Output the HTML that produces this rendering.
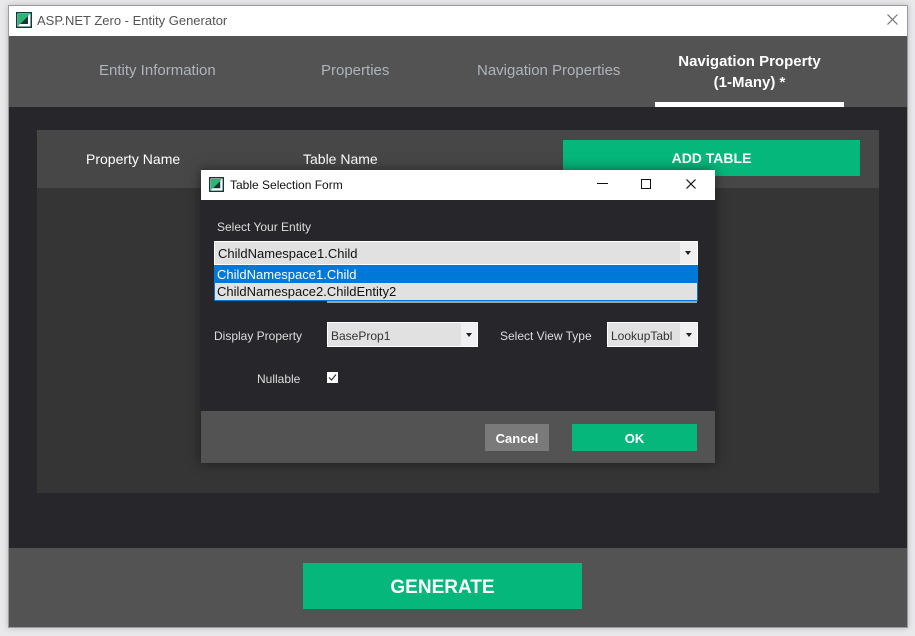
<!DOCTYPE html>
<html><head><style>
*{margin:0;padding:0;box-sizing:border-box}
body{width:915px;height:636px;background:#e9e9ec;font-family:"Liberation Sans",sans-serif;position:relative;overflow:hidden}
.a{position:absolute}
.win{left:8px;top:5px;width:900px;height:623px;border:1px solid #9a9a9a;background:#27272b;box-shadow:0 0 6px rgba(0,0,0,.2)}
.t{color:#aeb4bc;font-size:15px}
</style></head><body>
<div class="a win"></div>
<div class="a" style="left:9px;top:6px;width:898px;height:30px;background:#fff"></div>
<svg class="a" style="left:16px;top:12px" width="16" height="16" viewBox="0 0 16 16"><rect x="0" y="0" width="16" height="16" fill="#0e3a3a"/><rect x="1.5" y="1.5" width="13" height="13" fill="#fff"/><polygon points="2,2 14,2 2,14" fill="#2bb673"/><polygon points="4,12 12,4 12,12" fill="#0e3a3a"/></svg>
<div class="a" style="left:37px;top:13px;font-size:13px;color:#555">ASP.NET Zero - Entity Generator</div>
<svg class="a" style="left:887px;top:14px" width="11" height="11" viewBox="0 0 11 11"><path d="M0.5 0.5L10.5 10.5M10.5 0.5L0.5 10.5" stroke="#777" stroke-width="1.2"/></svg>
<div class="a" style="left:9px;top:36px;width:898px;height:71px;background:#535353"></div>
<div class="a t" style="left:99px;top:62px">Entity Information</div>
<div class="a t" style="left:321px;top:62px">Properties</div>
<div class="a t" style="left:477px;top:62px">Navigation Properties</div>
<div class="a" style="left:655px;top:51px;width:189px;text-align:center;color:#fff;font-weight:bold;font-size:15px;line-height:21px">Navigation Property<br>(1-Many) *</div>
<div class="a" style="left:655px;top:102px;width:189px;height:5px;background:#fff"></div>
<div class="a" style="left:37px;top:130px;width:842px;height:363px;background:#353535"></div>
<div class="a" style="left:37px;top:130px;width:842px;height:58px;background:#474747"></div>
<div class="a" style="left:86px;top:151px;color:#fff;font-size:14px">Property Name</div>
<div class="a" style="left:303px;top:151px;color:#fff;font-size:14px">Table Name</div>
<div class="a" style="left:563px;top:140px;width:297px;height:36px;background:#05b77a;color:#fff;font-weight:bold;font-size:14px;text-align:center;line-height:37px">ADD TABLE</div>
<div class="a" style="left:9px;top:548px;width:898px;height:79px;background:#535353"></div>
<div class="a" style="left:303px;top:563px;width:279px;height:46px;background:#05b77a;color:#fff;font-weight:bold;font-size:19px;text-align:center;line-height:50px">GENERATE</div>
<!-- dialog -->
<div class="a" style="left:201px;top:170px;width:514px;height:293px;background:#27272b;box-shadow:0 0 12px rgba(0,0,0,.5)"></div>
<div class="a" style="left:201px;top:170px;width:514px;height:30px;background:#fff"></div>
<svg class="a" style="left:209px;top:177px" width="15" height="15" viewBox="0 0 16 16"><rect x="0" y="0" width="16" height="16" fill="#0e3a3a"/><rect x="1.5" y="1.5" width="13" height="13" fill="#fff"/><polygon points="2,2 14,2 2,14" fill="#2bb673"/><polygon points="4,12 12,4 12,12" fill="#0e3a3a"/></svg>
<div class="a" style="left:230px;top:178px;font-size:12px;color:#111">Table Selection Form</div>
<div class="a" style="left:597px;top:183px;width:11px;height:1px;background:#111"></div>
<div class="a" style="left:641px;top:179px;width:10px;height:10px;border:1px solid #111"></div>
<svg class="a" style="left:686px;top:179px" width="10" height="10" viewBox="0 0 10 10"><path d="M0.5 0.5L9.5 9.5M9.5 0.5L0.5 9.5" stroke="#111" stroke-width="1.2"/></svg>
<div class="a" style="left:217px;top:220px;color:#ddd;font-size:12px">Select Your Entity</div>
<div class="a" style="left:214px;top:241px;width:484px;height:24px;background:#e1e1e1;border:1px solid #fff"></div>
<div class="a" style="left:680px;top:242px;width:17px;height:22px;background:#f0f0f0"></div>
<div class="a" style="left:685px;top:251px;border:3px solid transparent;border-top:4px solid #222;border-bottom:0"></div>
<div class="a" style="left:218px;top:246px;font-size:13px;color:#111">ChildNamespace1.Child</div>
<div class="a" style="left:327px;top:297px;width:370px;height:6px;background:#a0a0a0"></div>
<div class="a" style="left:214px;top:265px;width:484px;height:36px;background:#e1e1e1;border:1px solid #0078d7"></div>
<div class="a" style="left:215px;top:266px;width:482px;height:17px;background:#0078d7"></div>
<div class="a" style="left:217px;top:267px;font-size:13px;color:#fff">ChildNamespace1.Child</div>
<div class="a" style="left:217px;top:284px;font-size:13px;color:#111">ChildNamespace2.ChildEntity2</div>
<div class="a" style="left:214px;top:329px;color:#ddd;font-size:12px">Display Property</div>
<div class="a" style="left:327px;top:322px;width:151px;height:25px;background:#e1e1e1;border:1px solid #fff"></div>
<div class="a" style="left:461px;top:323px;width:16px;height:23px;background:#f0f0f0"></div>
<div class="a" style="left:466px;top:333px;border:3px solid transparent;border-top:4px solid #222;border-bottom:0"></div>
<div class="a" style="left:331px;top:329px;font-size:12px;color:#333">BaseProp1</div>
<div class="a" style="left:500px;top:329px;color:#ddd;font-size:12px">Select View Type</div>
<div class="a" style="left:607px;top:322px;width:91px;height:25px;background:#e1e1e1;border:1px solid #fff;overflow:hidden"><span style="position:absolute;left:3px;top:6px;font-size:12px;color:#333;white-space:nowrap">LookupTabl</span></div>
<div class="a" style="left:680px;top:323px;width:17px;height:23px;background:#f0f0f0"></div>
<div class="a" style="left:686px;top:333px;border:3px solid transparent;border-top:4px solid #222;border-bottom:0"></div>
<div class="a" style="left:257px;top:372px;color:#ddd;font-size:12px">Nullable</div>
<div class="a" style="left:327px;top:372px;width:11px;height:11px;background:#fff"></div>
<svg class="a" style="left:327px;top:372px" width="11" height="11" viewBox="0 0 11 11"><path d="M2 5.5L4.5 8L9 2.5" stroke="#333" stroke-width="1.2" fill="none"/></svg>
<div class="a" style="left:201px;top:411px;width:514px;height:52px;background:#535353"></div>
<div class="a" style="left:485px;top:424px;width:64px;height:27px;background:#7a7a7a;color:#fff;font-weight:bold;font-size:13px;text-align:center;line-height:29px">Cancel</div>
<div class="a" style="left:572px;top:424px;width:125px;height:27px;background:#05b77a;color:#fff;font-weight:bold;font-size:13px;text-align:center;line-height:29px">OK</div>
</body></html>
